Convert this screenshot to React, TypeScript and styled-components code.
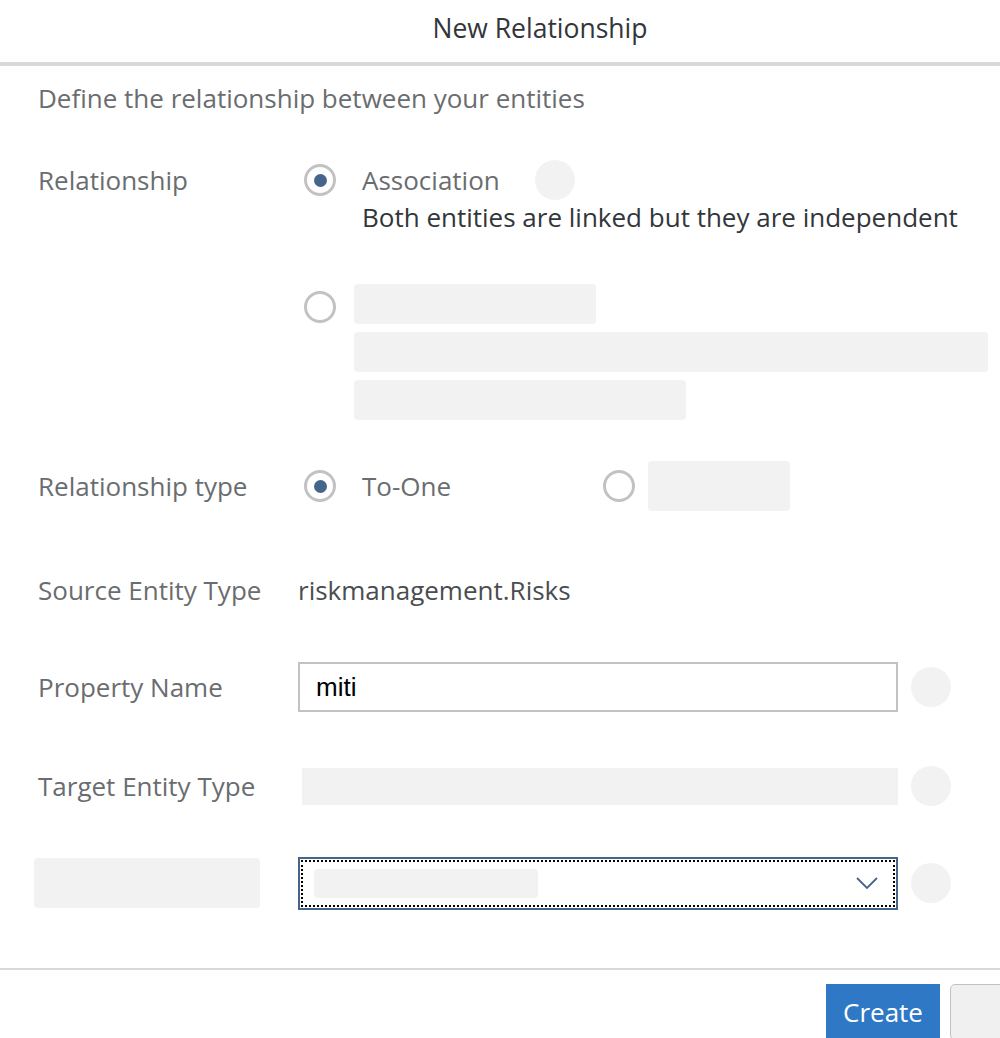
import styled, { createGlobalStyle } from 'styled-components'

const GlobalStyle = createGlobalStyle`
  html, body {
    margin: 0;
    padding: 0;
    background: #ffffff;
    overflow: hidden;
  }
  body {
    font-family: 'Open Sans', 'Liberation Sans', Arial, sans-serif;
    color: #32363a;
  }
`

const placeholder = '#f2f2f2'

const Dialog = styled.div`
  width: 1000px;
  height: 1038px;
  display: flex;
  flex-direction: column;
  overflow: hidden;
`

const Header = styled.header`
  height: 66px;
  display: flex;
  align-items: center;
  justify-content: center;
  padding-left: 80px;
  padding-bottom: 6px;
  box-sizing: border-box;
  font-size: 26.5px;
  color: #32363a;
  border-bottom: 4px solid #d9d9d9;
`

const Content = styled.div`
  flex: 1;
  padding: 16px 12px 0 38px;
`

const Intro = styled.p`
  margin: 0;
  font-size: 26px;
  line-height: 32px;
  color: #6a6d70;
`

const Row = styled.div<{ $top: number; $height?: number }>`
  display: grid;
  grid-template-columns: 260px 1fr;
  align-items: ${(p) => (p.$height ? 'center' : 'start')};
  margin-top: ${(p) => p.$top}px;
  min-height: ${(p) => p.$height ?? 0}px;
`

const Label = styled.div`
  font-size: 26px;
  line-height: 36px;
  color: #6a6d70;
`

const LabelSkeleton = styled.div`
  width: 226px;
  height: 50px;
  margin-left: -4px;
  border-radius: 4px;
  background: ${placeholder};
`

const Value = styled.div`
  font-size: 26px;
  line-height: 36px;
  color: #4a4d50;
`

const OptionList = styled.div`
  display: flex;
  flex-direction: column;
  gap: 49px;
  padding-left: 6px;
`

const Option = styled.div`
  display: flex;
  align-items: flex-start;
  gap: 18px;
`

const Radio = styled.span<{ $checked?: boolean; $offset?: number }>`
  flex: none;
  width: 32px;
  height: 32px;
  box-sizing: border-box;
  margin-top: ${(p) => p.$offset ?? 2}px;
  border: 3px solid #c2c2c2;
  border-radius: 50%;
  display: flex;
  align-items: center;
  justify-content: center;
  &::after {
    content: '';
    width: 13px;
    height: 13px;
    border-radius: 50%;
    background: ${(p) => (p.$checked ? '#45658b' : 'transparent')};
  }
`

const OptionBody = styled.div`
  display: flex;
  flex-direction: column;
  gap: 8px;
`

const OptionTitle = styled.div`
  display: flex;
  align-items: center;
  gap: 35px;
  height: 36px;
  padding-left: 8px;
  font-size: 26px;
  line-height: 36px;
  color: #6a6d70;
`

const OptionText = styled.div`
  padding-left: 8px;
  margin-top: -7px;
  font-size: 26px;
  line-height: 36px;
  color: #32363a;
`

const Bar = styled.div<{ $w: number; $h?: number }>`
  width: ${(p) => p.$w}px;
  height: ${(p) => p.$h ?? 40}px;
  border-radius: 4px;
  background: ${placeholder};
`

const Dot = styled.span`
  flex: none;
  width: 40px;
  height: 40px;
  border-radius: 50%;
  background: ${placeholder};
`

const Inline = styled.div`
  display: flex;
  align-items: center;
  padding-left: 6px;
`

const InlineOption = styled.div<{ $width?: number }>`
  display: flex;
  align-items: center;
  gap: 26px;
  width: ${(p) => (p.$width ? `${p.$width}px` : 'auto')};
`

const InlineText = styled.span`
  font-size: 26px;
  color: #6a6d70;
`

const InlineBar = styled.div`
  width: 142px;
  height: 50px;
  margin-left: -13px;
  border-radius: 4px;
  background: ${placeholder};
`

const FieldLine = styled.div`
  display: flex;
  align-items: center;
  gap: 13px;
`

const Input = styled.input`
  width: 600px;
  height: 50px;
  box-sizing: border-box;
  border: 2px solid #c2c2c2;
  padding: 0 16px;
  font-family: 'Liberation Sans', Arial, sans-serif;
  font-size: 26px;
  color: #000;
  outline: none;
`

const WideBar = styled.div`
  width: 596px;
  height: 37px;
  margin-left: 4px;
  background: ${placeholder};
`

const Select = styled.div`
  width: 600px;
  height: 53px;
  box-sizing: border-box;
  border: 2px solid #45658b;
  position: relative;
  display: flex;
  align-items: center;
  justify-content: space-between;
  padding: 0 18px 0 14px;
  &::before {
    content: '';
    position: absolute;
    inset: 1px;
    border: 2px dotted #000;
    pointer-events: none;
  }
`

const SelectBar = styled.div`
  width: 224px;
  height: 29px;
  border-radius: 4px;
  background: ${placeholder};
`

const Footer = styled.footer`
  border-top: 2px solid #d9d9d9;
  margin-top: auto;
  height: 70px;
  box-sizing: border-box;
  padding-top: 14px;
  display: flex;
  justify-content: flex-end;
  gap: 10px;
  margin-right: -40px;
`

const PrimaryButton = styled.button`
  width: 114px;
  height: 56px;
  border: none;
  border-radius: 0;
  background: #2f78c5;
  color: #fff;
  font-family: 'Open Sans', 'Liberation Sans', Arial, sans-serif;
  font-size: 26px;
  padding: 0;
`

const GhostButton = styled.button`
  width: 90px;
  height: 56px;
  border: 1px solid #c2c2c2;
  border-radius: 5px;
  background: #f0f0f0;
`

function Chevron() {
  return (
    <svg width="22" height="12" viewBox="0 0 22 12" fill="none">
      <path d="M1 1 L11 11 L21 1" stroke="#45658b" strokeWidth="1.8" />
    </svg>
  )
}

export default function App() {
  return (
    <>
      <GlobalStyle />
      <Dialog>
        <Header>New Relationship</Header>
        <Content>
          <Intro>Define the relationship between your entities</Intro>

          <Row $top={48}>
            <Label>Relationship</Label>
            <OptionList>
              <Option>
                <Radio $checked />
                <OptionBody>
                  <OptionTitle>
                    Association
                    <Dot />
                  </OptionTitle>
                  <OptionText>Both entities are linked but they are independent</OptionText>
                </OptionBody>
              </Option>
              <Option>
                <Radio $offset={7} />
                <OptionBody>
                  <Bar $w={242} />
                  <Bar $w={634} />
                  <Bar $w={332} />
                </OptionBody>
              </Option>
            </OptionList>
          </Row>

          <Row $top={41} $height={50}>
            <Label>Relationship type</Label>
            <Inline>
              <InlineOption $width={299}>
                <Radio $checked $offset={0} />
                <InlineText>To-One</InlineText>
              </InlineOption>
              <InlineOption>
                <Radio $offset={0} />
                <InlineBar />
              </InlineOption>
            </Inline>
          </Row>

          <Row $top={54} $height={50}>
            <Label>Source Entity Type</Label>
            <Value>riskmanagement.Risks</Value>
          </Row>

          <Row $top={47} $height={50}>
            <Label>Property Name</Label>
            <FieldLine>
              <Input defaultValue="miti" />
              <Dot />
            </FieldLine>
          </Row>

          <Row $top={49} $height={50}>
            <Label>Target Entity Type</Label>
            <FieldLine>
              <WideBar />
              <Dot />
            </FieldLine>
          </Row>

          <Row $top={45} $height={54}>
            <LabelSkeleton />
            <FieldLine>
              <Select>
                <SelectBar />
                <Chevron />
              </Select>
              <Dot />
            </FieldLine>
          </Row>
        </Content>
        <Footer>
          <PrimaryButton>Create</PrimaryButton>
          <GhostButton />
        </Footer>
      </Dialog>
    </>
  )
}
